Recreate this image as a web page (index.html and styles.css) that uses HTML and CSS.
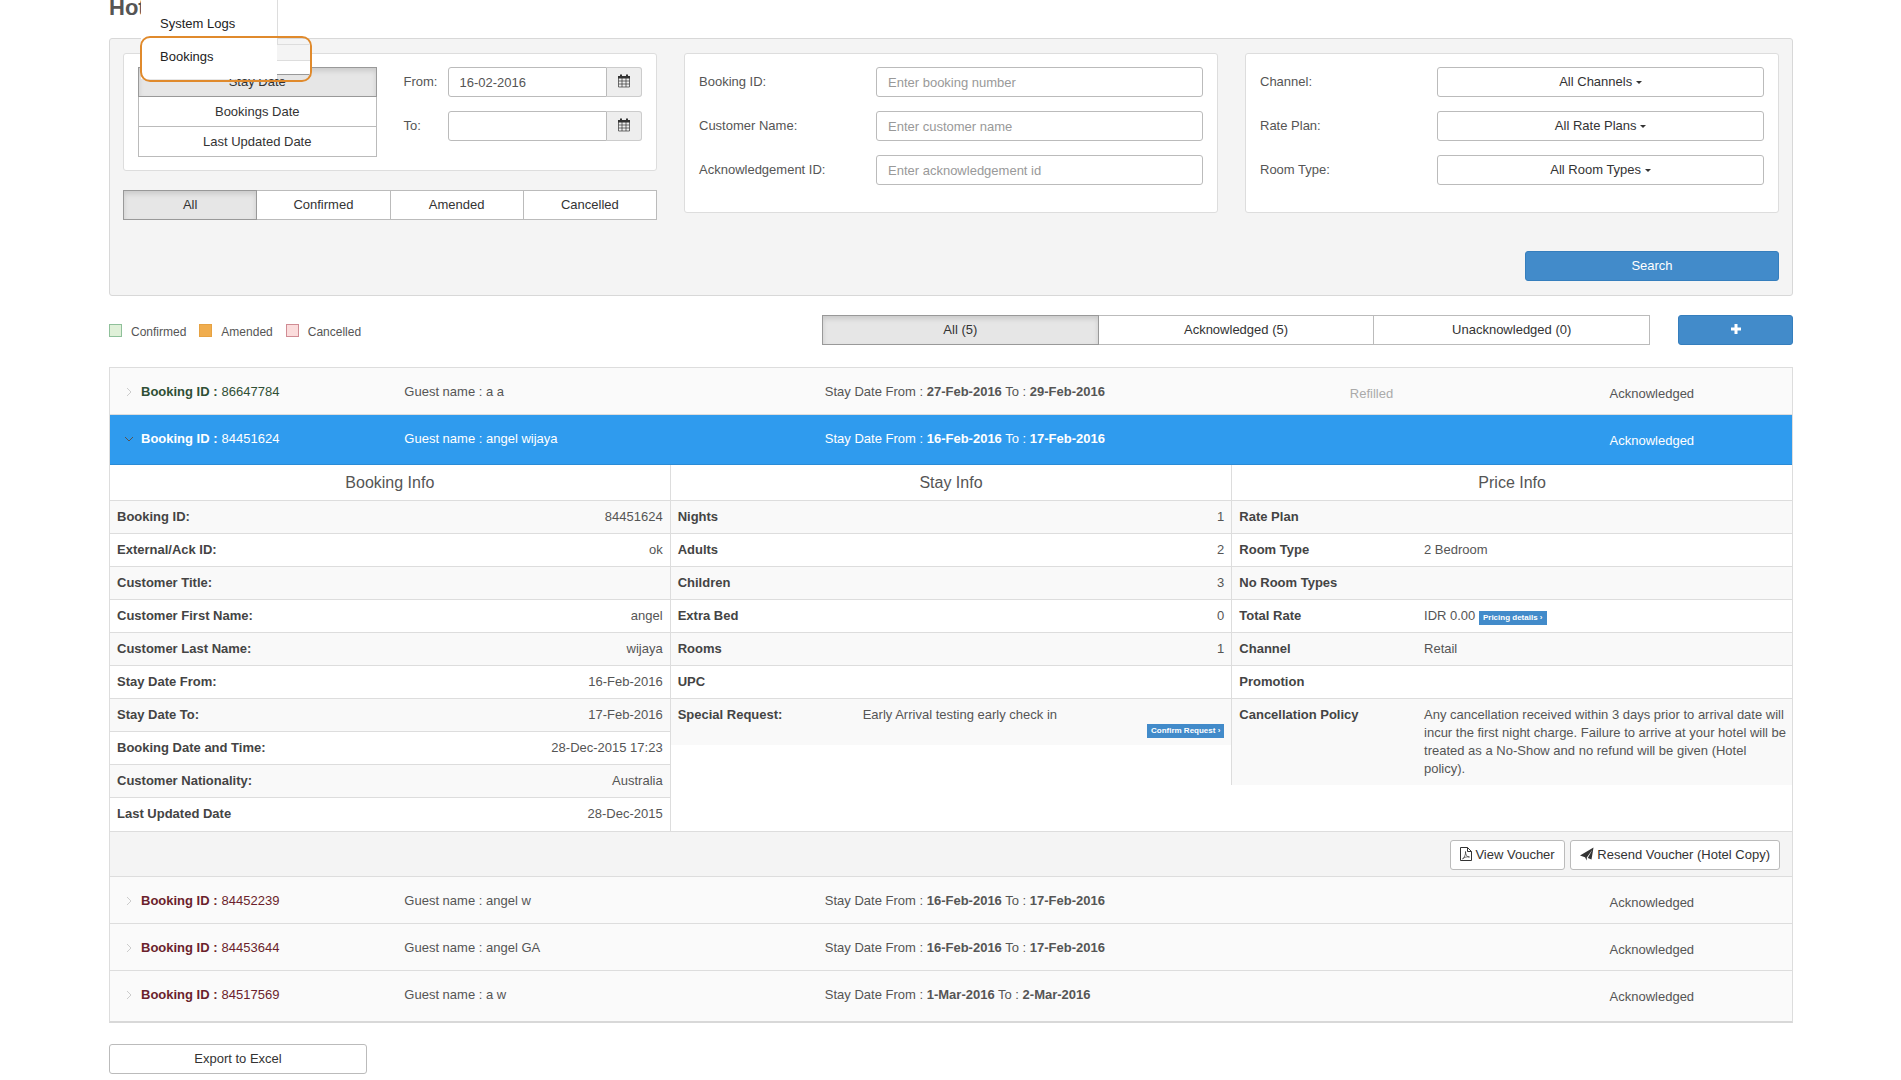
FILE: index.html
```html
<!DOCTYPE html>
<html lang="en">
<head>
    <meta charset="UTF-8">
    <meta name="viewport" content="width=device-width, initial-scale=1.0">
    <title>Bookings</title>
    <link rel="stylesheet" href="styles.css">
</head>
<body>
    <svg class="sprite" aria-hidden="true">
        <symbol id="icon-calendar" viewBox="0 0 14 14">
            <path fill="none" stroke="currentColor" stroke-width=".7" d="M1.500 4v9h11V4M1.500 7h11M1.500 10h11M5 4v9M9 4v9"/>
            <path fill="currentColor" d="M1 2h2V.5h2V2h4V.5h2V2h2v2.500H1z"/>
        </symbol>
        <symbol id="icon-pdf" viewBox="0 0 12 14">
            <path fill="none" stroke="currentColor" d="M.5.5h7l4 4v9H.5zM7.500.5v4h4"/>
            <path fill="none" stroke="currentColor" stroke-width=".7" d="M2.500 12C4 11 6 7.500 5.500 4.500 5.500 8 7 10 9.500 10 7 9.500 4.500 10 2.500 12z"/>
        </symbol>
        <symbol id="icon-plane" viewBox="0 0 14 14">
            <path fill="currentColor" d="M13.500.5l-2 12-3.700-1.500L12.500 2.500 6.800 10.500V13.500L5 10.300 0 8.500z"/>
        </symbol>
    </svg>

    <nav class="menu">
        <a href="#">System Logs</a>
        <a href="#">Bookings</a>
        <span class="highlight"><span class="peek"></span></span>
    </nav>

    <main class="page">
        <h1>Hot</h1>

        <form class="filters">
            <div class="filter-grid">
                <div class="filter-col">
                    <div class="card dates">
                        <div class="btn-group vertical">
                            <button type="button" class="btn active">Stay Date</button>
                            <button type="button" class="btn">Bookings Date</button>
                            <button type="button" class="btn">Last Updated Date</button>
                        </div>
                        <div class="date-fields">
                            <div class="date-row">
                                <label for="from">From:</label>
                                <input type="text" id="from" value="16-02-2016">
                                <button type="button" class="addon" aria-label="Pick from date"><svg class="icon"><use href="#icon-calendar"/></svg></button>
                            </div>
                            <div class="date-row">
                                <label for="to">To:</label>
                                <input type="text" id="to">
                                <button type="button" class="addon" aria-label="Pick to date"><svg class="icon"><use href="#icon-calendar"/></svg></button>
                            </div>
                        </div>
                    </div>
                    <div class="btn-group">
                        <button type="button" class="btn active">All</button>
                        <button type="button" class="btn">Confirmed</button>
                        <button type="button" class="btn">Amended</button>
                        <button type="button" class="btn">Cancelled</button>
                    </div>
                </div>

                <div class="card fields">
                    <div class="field">
                        <label for="bookingId">Booking ID:</label>
                        <input type="text" id="bookingId" placeholder="Enter booking number">
                    </div>
                    <div class="field">
                        <label for="customer">Customer Name:</label>
                        <input type="text" id="customer" placeholder="Enter customer name">
                    </div>
                    <div class="field">
                        <label for="ackId">Acknowledgement ID:</label>
                        <input type="text" id="ackId" placeholder="Enter acknowledgement id">
                    </div>
                </div>

                <div class="card fields">
                    <div class="field">
                        <label for="channel">Channel:</label>
                        <button type="button" class="btn" id="channel">All Channels <span class="caret"></span></button>
                    </div>
                    <div class="field">
                        <label for="ratePlan">Rate Plan:</label>
                        <button type="button" class="btn" id="ratePlan">All Rate Plans <span class="caret"></span></button>
                    </div>
                    <div class="field">
                        <label for="roomType">Room Type:</label>
                        <button type="button" class="btn" id="roomType">All Room Types <span class="caret"></span></button>
                    </div>
                </div>
            </div>
            <div class="search-row">
                <button type="submit" class="btn primary search">Search</button>
            </div>
        </form>

        <div class="toolbar">
            <div class="legend">
                <span class="swatch confirmed"></span><span class="legend-text">Confirmed</span>
                <span class="swatch amended"></span><span class="legend-text">Amended</span>
                <span class="swatch cancelled"></span><span class="legend-text">Cancelled</span>
            </div>
            <div class="toolbar-right">
                <div class="btn-group">
                    <button type="button" class="btn active">All (5)</button>
                    <button type="button" class="btn">Acknowledged (5)</button>
                    <button type="button" class="btn">Unacknowledged (0)</button>
                </div>
                <button type="button" class="btn primary add" aria-label="Add booking"><svg class="plus" viewBox="0 0 10 10"><path fill="#fff" d="M3.500 0h3v3.500H10v3H6.500V10h-3V6.500H0v-3h3.500z"/></svg></button>
            </div>
        </div>

        <section class="bookings">
            <div class="booking">
                <div class="id green"><svg class="chevron" viewBox="0 0 10 10"><path d="M3 1l4 4-4 4"/></svg><b>Booking ID :</b> 86647784</div>
                <div>Guest name : a a</div>
                <div>Stay Date From : <b>27-Feb-2016</b> To : <b>29-Feb-2016</b></div>
                <div class="state muted">Refilled</div>
                <div class="state">Acknowledged</div>
            </div>
            <div class="booking open">
                <div class="id"><svg class="chevron" viewBox="0 0 10 10"><path d="M1 3l4 4 4-4"/></svg><b>Booking ID :</b> 84451624</div>
                <div>Guest name : angel wijaya</div>
                <div>Stay Date From : <b>16-Feb-2016</b> To : <b>17-Feb-2016</b></div>
                <div class="state"></div>
                <div class="state">Acknowledged</div>
            </div>

            <div class="details">
                <div class="info guest">
                    <h2>Booking Info</h2>
                    <table>
                        <tr><th>Booking ID:</th><td>84451624</td></tr>
                        <tr><th>External/Ack ID:</th><td>ok</td></tr>
                        <tr><th>Customer Title:</th><td></td></tr>
                        <tr><th>Customer First Name:</th><td>angel</td></tr>
                        <tr><th>Customer Last Name:</th><td>wijaya</td></tr>
                        <tr><th>Stay Date From:</th><td>16-Feb-2016</td></tr>
                        <tr><th>Stay Date To:</th><td>17-Feb-2016</td></tr>
                        <tr><th>Booking Date and Time:</th><td>28-Dec-2015 17:23</td></tr>
                        <tr><th>Customer Nationality:</th><td>Australia</td></tr>
                        <tr><th>Last Updated Date</th><td>28-Dec-2015</td></tr>
                    </table>
                </div>
                <div class="info">
                    <h2>Stay Info</h2>
                    <table>
                        <tr><th>Nights</th><td>1</td></tr>
                        <tr><th>Adults</th><td>2</td></tr>
                        <tr><th>Children</th><td>3</td></tr>
                        <tr><th>Extra Bed</th><td>0</td></tr>
                        <tr><th>Rooms</th><td>1</td></tr>
                        <tr><th>UPC</th><td></td></tr>
                        <tr><th>Special Request:</th><td class="request">Early Arrival testing early check in<button type="button" class="mini">Confirm Request ›</button></td></tr>
                    </table>
                </div>
                <div class="info price">
                    <h2>Price Info</h2>
                    <table>
                        <tr><th>Rate Plan</th><td></td></tr>
                        <tr><th>Room Type</th><td>2 Bedroom</td></tr>
                        <tr><th>No Room Types</th><td></td></tr>
                        <tr><th>Total Rate</th><td>IDR 0.00 <button type="button" class="mini">Pricing details ›</button></td></tr>
                        <tr><th>Channel</th><td>Retail</td></tr>
                        <tr><th>Promotion</th><td></td></tr>
                        <tr><th>Cancellation Policy</th><td>Any cancellation received within 3 days prior to arrival date will incur the first night charge. Failure to arrive at your hotel will be treated as a No-Show and no refund will be given (Hotel policy).</td></tr>
                    </table>
                </div>
            </div>
            <div class="actions">
                <button type="button" class="btn"><svg class="icon pdf"><use href="#icon-pdf"/></svg> View Voucher</button>
                <button type="button" class="btn"><svg class="icon"><use href="#icon-plane"/></svg> Resend Voucher (Hotel Copy)</button>
            </div>

            <div class="booking">
                <div class="id red"><svg class="chevron" viewBox="0 0 10 10"><path d="M3 1l4 4-4 4"/></svg><b>Booking ID :</b> 84452239</div>
                <div>Guest name : angel w</div>
                <div>Stay Date From : <b>16-Feb-2016</b> To : <b>17-Feb-2016</b></div>
                <div class="state"></div>
                <div class="state">Acknowledged</div>
            </div>
            <div class="booking">
                <div class="id red"><svg class="chevron" viewBox="0 0 10 10"><path d="M3 1l4 4-4 4"/></svg><b>Booking ID :</b> 84453644</div>
                <div>Guest name : angel GA</div>
                <div>Stay Date From : <b>16-Feb-2016</b> To : <b>17-Feb-2016</b></div>
                <div class="state"></div>
                <div class="state">Acknowledged</div>
            </div>
            <div class="booking">
                <div class="id red"><svg class="chevron" viewBox="0 0 10 10"><path d="M3 1l4 4-4 4"/></svg><b>Booking ID :</b> 84517569</div>
                <div>Guest name : a w</div>
                <div>Stay Date From : <b>1-Mar-2016</b> To : <b>2-Mar-2016</b></div>
                <div class="state"></div>
                <div class="state">Acknowledged</div>
            </div>
        </section>

        <button type="button" class="btn export">Export to Excel</button>
    </main>
</body>
</html>
```
FILE: styles.css
```css
* {
    box-sizing: border-box;
}
body {
    margin: 0;
    background: #fff;
    color: #555;
    font-family: Arial, "Liberation Sans", sans-serif;
    font-size: 13px;
    line-height: 18px;
}
button, input {
    font: inherit;
}
.sprite {
    display: none;
}
.page {
    padding: 0 108px 0 109px;
}
h1 {
    margin: 0;
    height: 38px;
    font-size: 22px;
    line-height: 16px;
}

/* open dropdown over the page */
.menu {
    position: absolute;
    top: 0;
    left: 141px;
    width: 137px;
    height: 79px;
    padding: 7px 0 0 19px;
    display: flex;
    flex-direction: column;
    background: #fff;
    border-right: 1px solid #ddd;
}
.menu a {
    line-height: 33px;
    color: #222;
    text-decoration: none;
}
.highlight {
    position: absolute;
    top: 36px;
    left: -1px;
    width: 172px;
    height: 46px;
    border: 2px solid #e08a2c;
    border-radius: 10px;
    overflow: hidden;
}
.peek {
    position: absolute;
    top: 6px;
    right: 0;
    width: 33px;
    height: 31px;
    background: #fff;
    border-top: 1px solid #ddd;
    border-bottom: 1px solid #999;
}
.peek::before {
    content: "";
    display: block;
    height: 15px;
    background: #f4f4f4;
    border-bottom: 1px solid #ddd;
}

/* buttons */
.btn {
    height: 30px;
    padding: 0 9px;
    background: #fff;
    border: 1px solid #bbb;
    border-radius: 3px;
    color: #333;
    cursor: pointer;
}
.btn.active {
    background: #e6e6e6;
    border-color: #999;
    box-shadow: inset 0 3px 5px rgba(0, 0, 0, 0.12);
}
.btn.primary {
    background: #428bca;
    border-color: #357ebd;
    color: #fff;
}
.btn-group {
    display: flex;
}
.btn-group .btn {
    flex: 1;
    border-radius: 0;
}
.btn-group .btn + .btn {
    border-left: 0;
}
.btn-group.vertical {
    flex-direction: column;
}
.btn-group.vertical .btn {
    flex: none;
}
.btn-group.vertical .btn + .btn {
    border-left: 1px solid #bbb;
    border-top: 0;
}
.caret {
    display: inline-block;
    border: 3px solid transparent;
    border-top-color: #333;
    border-bottom: 0;
    vertical-align: middle;
}
.icon {
    width: 14px;
    height: 14px;
    vertical-align: -2px;
}
.icon.pdf {
    width: 12px;
}

/* filters */
.filters {
    padding: 14px 13px;
    background: #f4f4f4;
    border: 1px solid #d8d8d8;
    border-radius: 3px;
}
.filter-grid {
    display: grid;
    grid-template-columns: repeat(3, 1fr);
    align-items: start;
    gap: 27px;
}
.card {
    padding: 13px 14px;
    background: #fff;
    border: 1px solid #ddd;
    border-radius: 3px;
}
.card.dates {
    display: grid;
    grid-template-columns: 1fr 1fr;
    gap: 27px;
    height: 118px;
    margin-bottom: 19px;
}
.date-fields, .fields {
    display: flex;
    flex-direction: column;
    gap: 14px;
    min-width: 0;
}
.card.fields {
    padding-bottom: 27px;
}
.date-row {
    display: flex;
}
.date-row label {
    width: 44px;
    flex: none;
    line-height: 30px;
}
.date-row input {
    flex: 1;
    min-width: 0;
    border-radius: 3px 0 0 3px;
}
.addon {
    width: 35px;
    padding: 0;
    background: #eee;
    border: 1px solid #ccc;
    border-left: 0;
    border-radius: 0 3px 3px 0;
    color: #333;
}
input {
    height: 30px;
    padding: 0 11px;
    border: 1px solid #bbb;
    border-radius: 3px;
    color: #555;
}
input::placeholder {
    color: #999;
}
.field {
    display: grid;
    grid-template-columns: 177px 1fr;
}
.field label {
    line-height: 30px;
}
.search-row {
    display: flex;
    justify-content: flex-end;
    padding-top: 31px;
}
.search {
    width: 254px;
}

/* legend and acknowledgement tabs */
.toolbar {
    display: flex;
    justify-content: space-between;
    margin: 19px 0 22px;
}
.legend {
    display: flex;
    align-items: center;
    font-size: 12px;
}
.legend-text {
    padding-top: 4px;
}
.swatch {
    width: 13px;
    height: 13px;
    margin-right: 9px;
    border: 1px solid;
}
.swatch ~ .swatch {
    margin-left: 13px;
}
.swatch.confirmed {
    background: #dff0d8;
    border-color: #8fc09a;
}
.swatch.amended {
    background: #f0ad4e;
    border-color: #e6a243;
}
.swatch.cancelled {
    background: #fbdcdc;
    border-color: #d08c94;
}
.toolbar-right {
    display: flex;
    gap: 28px;
}
.toolbar-right .btn-group .btn {
    width: 276px;
}
.add {
    width: 115px;
}
.plus {
    width: 10px;
    height: 10px;
}

/* booking list */
.bookings {
    border: 1px solid #ddd;
    border-bottom: 2px solid #d8d8d8;
}
.booking {
    display: grid;
    grid-template-columns: 2fr 3fr 3fr 2fr 2fr;
    height: 47px;
    line-height: 48px;
    background: #fafafa;
    border-bottom: 1px solid #ddd;
}
.booking > div {
    padding-left: 14px;
}
.booking:last-child {
    height: 50px;
    border-bottom: 0;
}
.booking .id {
    display: flex;
    align-items: center;
    gap: 4px;
    height: 48px;
}
.booking .state {
    padding: 2px 0 0;
    text-align: center;
}
.booking .muted {
    color: #aaa;
}
.booking .green {
    color: #2f4f35;
}
.booking .red {
    color: #6b1f2c;
}
.booking.open {
    height: 50px;
    background: #2f9bee;
    border-color: #2a8bd6;
    color: #fff;
}
.chevron {
    width: 10px;
    height: 10px;
    margin-right: 3px;
    fill: none;
    stroke: #ccc;
}
.open .chevron {
    stroke: #555;
}

/* expanded booking */
.details {
    display: grid;
    grid-template-columns: repeat(3, 1fr);
    align-items: start;
    border-bottom: 1px solid #ddd;
}
.guest {
    border-right: 1px solid #ddd;
}
.price {
    border-left: 1px solid #ddd;
}
h2 {
    margin: 0;
    font-size: 16px;
    font-weight: normal;
    line-height: 35px;
    text-align: center;
}
table {
    width: 100%;
    border-collapse: collapse;
    table-layout: fixed;
}
tr:nth-child(odd) {
    background: #f9f9f9;
}
th, td {
    height: 33px;
    padding: 7px;
    border-top: 1px solid #ddd;
    vertical-align: top;
}
th {
    width: 33%;
    text-align: left;
    color: #444;
}
td {
    text-align: right;
}
.price td, .request {
    text-align: left;
}
.price td {
    padding-right: 5px;
}
.mini {
    height: 14px;
    padding: 0 4px;
    background: #428bca;
    border: 0;
    color: #fff;
    font-size: 8px;
    font-weight: bold;
    line-height: 14px;
}
.request .mini {
    display: block;
    margin-left: auto;
}
.actions {
    display: flex;
    justify-content: flex-end;
    gap: 5px;
    height: 45px;
    padding: 8px 12px;
    background: #f4f4f4;
    border-bottom: 1px solid #ddd;
}
.export {
    width: 258px;
    margin-top: 21px;
}
```
